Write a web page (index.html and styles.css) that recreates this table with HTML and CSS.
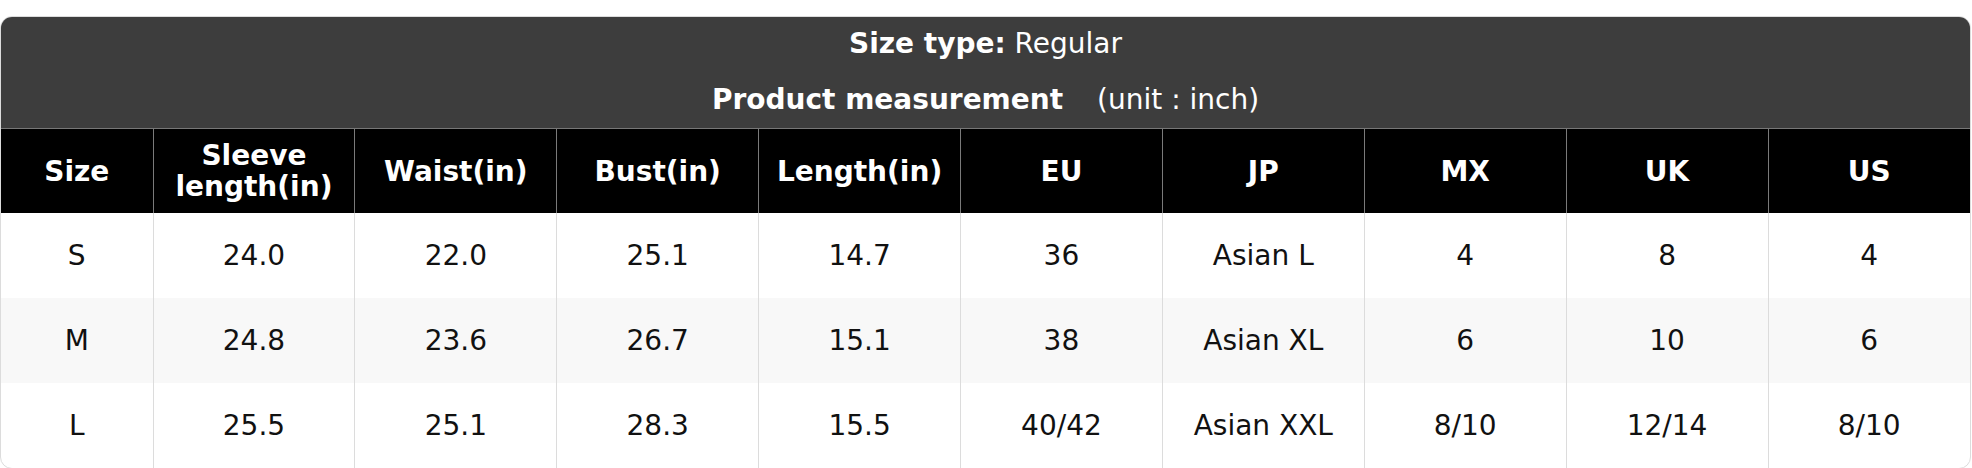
FILE: index.html
```html
<!DOCTYPE html>
<html>
<head>
<meta charset="utf-8">
<link rel="stylesheet" href="styles.css">
</head>
<body>
<div class="card">
  <div class="title">
    <div class="line"><b>Size type:</b> Regular</div>
    <div class="line second"><b>Product measurement</b><span class="unit">(unit : inch)</span></div>
  </div>
  <table class="sizes">
    <colgroup>
      <col class="c-first"><col><col><col><col><col><col><col><col><col>
    </colgroup>
    <thead>
      <tr>
        <th>Size</th><th>Sleeve<br>length(in)</th><th>Waist(in)</th><th>Bust(in)</th><th>Length(in)</th><th>EU</th><th>JP</th><th>MX</th><th>UK</th><th>US</th>
      </tr>
    </thead>
    <tbody>
      <tr><td>S</td><td>24.0</td><td>22.0</td><td>25.1</td><td>14.7</td><td>36</td><td>Asian L</td><td>4</td><td>8</td><td>4</td></tr>
      <tr class="alt"><td>M</td><td>24.8</td><td>23.6</td><td>26.7</td><td>15.1</td><td>38</td><td>Asian XL</td><td>6</td><td>10</td><td>6</td></tr>
      <tr><td>L</td><td>25.5</td><td>25.1</td><td>28.3</td><td>15.5</td><td>40/42</td><td>Asian XXL</td><td>8/10</td><td>12/14</td><td>8/10</td></tr>
    </tbody>
  </table>
</div>
</body>
</html>
```
FILE: styles.css
```css
html, body {
  margin: 0;
  padding: 0;
  background: #ffffff;
}
body {
  font-family: "DejaVu Sans", sans-serif;
  padding-top: 16px;
}
.card {
  width: 1971px;
  box-sizing: border-box;
  border: 1px solid #dcdcdc;
  border-radius: 12px;
  overflow: hidden;
  background: #ffffff;
}
.title {
  background: #3d3d3d;
  color: #ffffff;
  text-align: center;
  font-size: 28px;
  padding: 0 0 3px 0;
  border-bottom: 1px solid #777777;
}
.line {
  line-height: 54px;
}
.line.second {
  margin-top: 4px;
  line-height: 50px;
}
.unit {
  margin-left: 34px;
}
.sizes {
  width: 100%;
  border-collapse: collapse;
  table-layout: fixed;
  font-size: 28px;
}
.c-first {
  width: 152px;
}
.sizes th {
  background: #000000;
  color: #ffffff;
  font-weight: bold;
  height: 84px;
  padding: 0;
  line-height: 31px;
  border-left: 1px solid #7a7a7a;
  text-align: center;
  vertical-align: middle;
}
.sizes td {
  height: 85px;
  padding: 0;
  text-align: center;
  vertical-align: middle;
  color: #111111;
  border-left: 1px solid #dcdcdc;
}
.sizes th:first-child,
.sizes td:first-child {
  border-left: none;
}
.sizes tr.alt td {
  background: #f8f8f8;
}
```
